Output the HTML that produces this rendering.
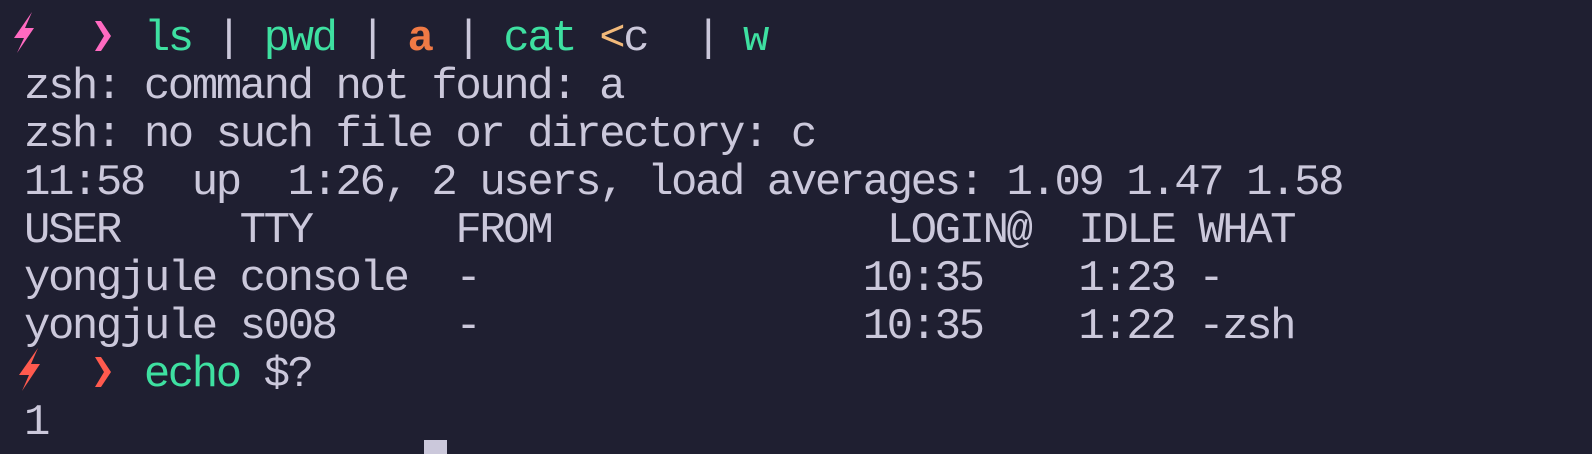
<!DOCTYPE html>
<html><head><meta charset="utf-8"><style>
html,body{margin:0;padding:0;background:#1f1f31;width:1592px;height:454px;overflow:hidden}
pre{margin:0;position:absolute;left:24px;top:15px;font-family:"Liberation Mono","DejaVu Sans Mono",monospace;font-size:44px;letter-spacing:-2.44px;line-height:48px;color:#cbc8db}
.g{color:#3ee0a1}.o{color:#f07a45;font-weight:bold}.y{color:#f2b97a}
svg{position:absolute;left:0;top:0}
.cur{position:absolute;left:424px;top:440px;width:23px;height:14px;background:#cbc8db}
</style></head><body>
<svg width="200" height="454" viewBox="0 0 200 454">
<path d="M32 12 L14 38 L24 38 L17 53 L34 28 L25 28 Z" fill="#ff6ac1"/>
<path d="M95 21 L101 21 L111 36 L101 51 L95 51 L104 36 Z" fill="#ff6ac1"/>
<path d="M38 348 L19 375 L29 375 L22 391 L40 364 L31 364 Z" fill="#ff5a4e"/>
<path d="M95 357 L101 357 L111 372 L101 387 L95 387 L104 372 Z" fill="#ff5a4e"/>
</svg>
<pre>     <span class="g">ls</span> | <span class="g">pwd</span> | <span class="o">a</span> | <span class="g">cat</span> <span class="y">&lt;</span>c  | <span class="g">w</span>
zsh: command not found: a
zsh: no such file or directory: c
11:58  up  1:26, 2 users, load averages: 1.09 1.47 1.58
USER     TTY      FROM              LOGIN@  IDLE WHAT
yongjule console  -                10:35    1:23 -
yongjule s008     -                10:35    1:22 -zsh
     <span class="g">echo</span> $?
1</pre>
<div class="cur"></div>
</body></html>
